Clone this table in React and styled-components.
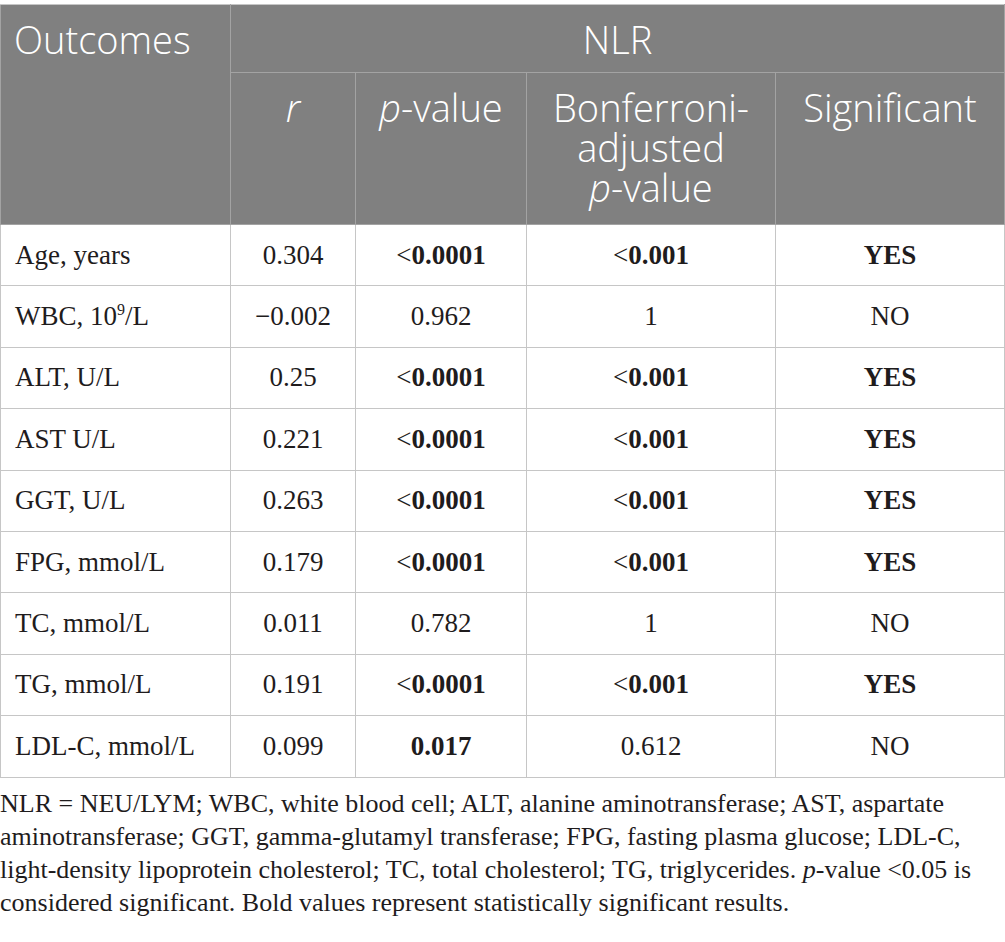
import styled, { createGlobalStyle } from "styled-components";

const GlobalStyle = createGlobalStyle`
  html, body {
    margin: 0;
    padding: 0;
    background: #ffffff;
  }
`;

const rows = [
  { label: "Age, years", r: "0.304", p: "<0.0001", adj: "<0.001", sig: "YES", bold: true, padj: true },
  { label: <>WBC, 10<sup>9</sup>/L</>, r: "\u22120.002", p: "0.962", adj: "1", sig: "NO" },
  { label: "ALT, U/L", r: "0.25", p: "<0.0001", adj: "<0.001", sig: "YES", bold: true, padj: true },
  { label: "AST U/L", r: "0.221", p: "<0.0001", adj: "<0.001", sig: "YES", bold: true, padj: true },
  { label: "GGT, U/L", r: "0.263", p: "<0.0001", adj: "<0.001", sig: "YES", bold: true, padj: true },
  { label: "FPG, mmol/L", r: "0.179", p: "<0.0001", adj: "<0.001", sig: "YES", bold: true, padj: true },
  { label: "TC, mmol/L", r: "0.011", p: "0.782", adj: "1", sig: "NO" },
  { label: "TG, mmol/L", r: "0.191", p: "<0.0001", adj: "<0.001", sig: "YES", bold: true, padj: true },
  { label: "LDL-C, mmol/L", r: "0.099", p: "0.017", adj: "0.612", sig: "NO", bold: true, padj: false },
];

// "<" stays regular, the number is bold
const Value = ({ text, bold }) => {
  if (!bold) return text;
  if (text.startsWith("<")) {
    return (
      <>
        &lt;<Strong>{text.slice(1)}</Strong>
      </>
    );
  }
  return <Strong>{text}</Strong>;
};

const App = () => {
  return (
    <Page>
      <GlobalStyle />
      <Table>
        <colgroup>
          <col style={{ width: 230 }} />
          <col style={{ width: 125 }} />
          <col style={{ width: 171 }} />
          <col style={{ width: 249 }} />
          <col />
        </colgroup>
        <thead>
          <tr>
            <HeadCell rowSpan={2} $align="left">Outcomes</HeadCell>
            <HeadCell colSpan={4} $top>NLR</HeadCell>
          </tr>
          <tr>
            <HeadCell $sub><i>r</i></HeadCell>
            <HeadCell $sub><i>p</i>-value</HeadCell>
            <HeadCell $sub>
              <HeadLine>Bonferroni-</HeadLine>
              <HeadLine>adjusted</HeadLine>
              <HeadLine><i>p</i>-value</HeadLine>
            </HeadCell>
            <HeadCell $sub>Significant</HeadCell>
          </tr>
        </thead>
        <tbody>
          {rows.map((row, i) => (
            <tr key={i}>
              <Cell $align="left">{row.label}</Cell>
              <Cell>{row.r}</Cell>
              <Cell><Value text={row.p} bold={row.bold} /></Cell>
              <Cell><Value text={row.adj} bold={row.padj} /></Cell>
              <Cell>{row.sig === "YES" ? <Strong>YES</Strong> : row.sig}</Cell>
            </tr>
          ))}
        </tbody>
      </Table>
      <Footnote>
        NLR = NEU/LYM; WBC, white blood cell; ALT, alanine aminotransferase; AST, aspartate
        <br />
        aminotransferase; GGT, gamma-glutamyl transferase; FPG, fasting plasma glucose; LDL-C,
        <br />
        light-density lipoprotein cholesterol; TC, total cholesterol; TG, triglycerides. <i>p</i>-value
        &lt;0.05 is
        <br />
        considered significant. Bold values represent statistically significant results.
      </Footnote>
    </Page>
  );
};

const Page = styled.div`
  width: 1005px;
  padding-top: 4px;
  box-sizing: border-box;
`;

const Table = styled.table`
  width: 1005px;
  border-collapse: collapse;
  table-layout: fixed;
  border: 1px solid #c6c6c6;
`;

const HeadCell = styled.th`
  background: #808080;
  color: #ffffff;
  font-family: "Open Sans", "DejaVu Sans", sans-serif;
  font-weight: 300;
  font-size: 38px;
  line-height: 40px;
  text-align: ${(p) => p.$align || "center"};
  vertical-align: top;
  border: 1px solid #a3a3a3;
  border-top-color: #c6c6c6;
  padding: ${(p) => (p.$sub ? "14px 4px 17px" : "14px 13px 13px")};
  height: ${(p) => (p.$top ? "40px" : "auto")};

  i {
    font-style: italic;
  }
`;

const HeadLine = styled.span`
  display: block;
  height: 40px;
`;

const Cell = styled.td`
  font-family: "Liberation Serif", "Times New Roman", serif;
  font-size: 27px;
  color: #1f1c1d;
  text-align: ${(p) => p.$align || "center"};
  vertical-align: middle;
  border: 1px solid #c6c6c6;
  padding: 0 14px;
  height: 60.4px;

  sup {
    font-size: 16px;
    line-height: 0;
    vertical-align: 10px;
  }
`;

const Strong = styled.b`
  font-weight: 700;
`;

const Footnote = styled.p`
  margin: 9px 0 0;
  font-family: "Liberation Serif", "Times New Roman", serif;
  font-size: 26px;
  line-height: 33px;
  color: #1f1c1d;
  white-space: nowrap;
`;

export default App;
